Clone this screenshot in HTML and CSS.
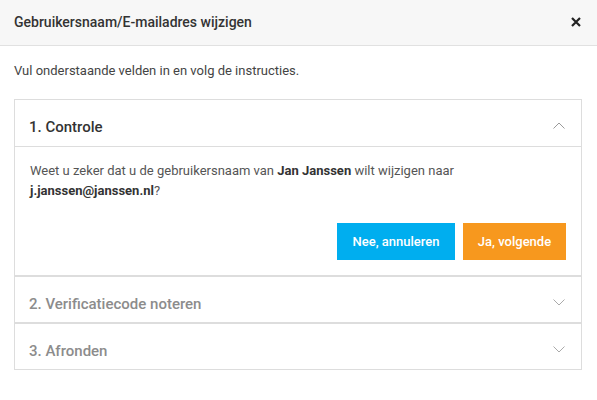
FILE: index.html
```html
<!DOCTYPE html>
<html lang="nl">
<head>
<meta charset="utf-8">
<title>Gebruikersnaam/E-mailadres wijzigen</title>
<link rel="stylesheet" href="styles.css">
</head>
<body>
<div class="modal">
  <div class="modal-header">
    <h1 class="modal-title">Gebruikersnaam/E-mailadres wijzigen</h1>
    <button class="close" aria-label="Sluiten">
      <svg width="10" height="10" viewBox="0 0 10 10"><path d="M1 1 L9 9 M9 1 L1 9" stroke="#222" stroke-width="2.2" fill="none"/></svg>
    </button>
  </div>
  <div class="modal-body">
    <p class="intro">Vul onderstaande velden in en volg de instructies.</p>
    <div class="accordion">
      <div class="panel open">
        <div class="panel-head">
          <span class="panel-title">1. Controle</span>
          <svg class="chev" width="12" height="7" viewBox="0 0 12 7"><path d="M0.5 6.5 L6 1 L11.5 6.5" stroke="#9a9a9a" stroke-width="1" fill="none"/></svg>
        </div>
        <div class="panel-body">
          <p class="question">Weet u zeker dat u de gebruikersnaam van <strong>Jan Janssen</strong> wilt wijzigen naar <strong>j.janssen@janssen.nl</strong>?</p>
          <div class="actions">
            <button class="btn btn-blue">Nee, annuleren</button>
            <button class="btn btn-orange">Ja, volgende</button>
          </div>
        </div>
      </div>
      <div class="panel">
        <div class="panel-head">
          <span class="panel-title muted">2. Verificatiecode noteren</span>
          <svg class="chev" width="12" height="7" viewBox="0 0 12 7"><path d="M0.5 0.5 L6 6 L11.5 0.5" stroke="#aaa" stroke-width="1" fill="none"/></svg>
        </div>
      </div>
      <div class="panel">
        <div class="panel-head">
          <span class="panel-title muted">3. Afronden</span>
          <svg class="chev" width="12" height="7" viewBox="0 0 12 7"><path d="M0.5 0.5 L6 6 L11.5 0.5" stroke="#aaa" stroke-width="1" fill="none"/></svg>
        </div>
      </div>
    </div>
  </div>
</div>
</body>
</html>
```
FILE: styles.css
```css
* { box-sizing: border-box; }
html, body { margin: 0; padding: 0; background: #fff; }
body {
  font-family: Roboto, "Liberation Sans", Arial, sans-serif;
  color: #555;
  font-size: 13px;
  line-height: 20px;
}
.modal { width: 597px; }
.modal-header {
  display: flex;
  align-items: center;
  justify-content: space-between;
  height: 46px;
  padding: 12px 16px 13px 14px;
  background: #f7f7f7;
  border-bottom: 1px solid #e1e1e1;
}
.modal-title {
  margin: 0;
  font-size: 14px;
  font-weight: 500;
  line-height: 20px;
  color: #333;
}
.close {
  border: 0;
  background: none;
  padding: 0;
  width: 10px;
  height: 10px;
  display: flex;
  cursor: pointer;
}
.modal-body { padding: 15px 15px 0 14px; }
.intro { margin: 0 0 18px; color: #444; }
.accordion { display: flex; flex-direction: column; }
.panel { border: 1px solid #ddd; }
.panel-head {
  display: flex;
  align-items: center;
  justify-content: space-between;
  height: 45px;
  padding: 17px 16px 8px 14px;
}
.panel-title {
  font-size: 15px;
  font-weight: 500;
  line-height: 20px;
  color: #333;
}
.panel-title.muted { color: #8c8c8c; }
.chev { margin-top: -4px; }
.open .panel-head { border-bottom: 1px solid #ddd; height: 47px; padding-bottom: 9px; }
.panel-body { padding: 14px 15px 15px 15px; }
.question { margin: 0; color: #555; }
.question strong { color: #333; font-weight: 700; }
.actions {
  display: flex;
  justify-content: flex-end;
  gap: 8px;
  margin-top: 22px;
}
.btn {
  border: 0;
  height: 37px;
  padding: 0 10px;
  font-family: inherit;
  font-size: 13px;
  font-weight: 500;
  color: #fff;
  cursor: pointer;
}
.btn-blue { background: #00aeef; width: 118px; }
.btn-orange { background: #f7981e; width: 103px; }
```
